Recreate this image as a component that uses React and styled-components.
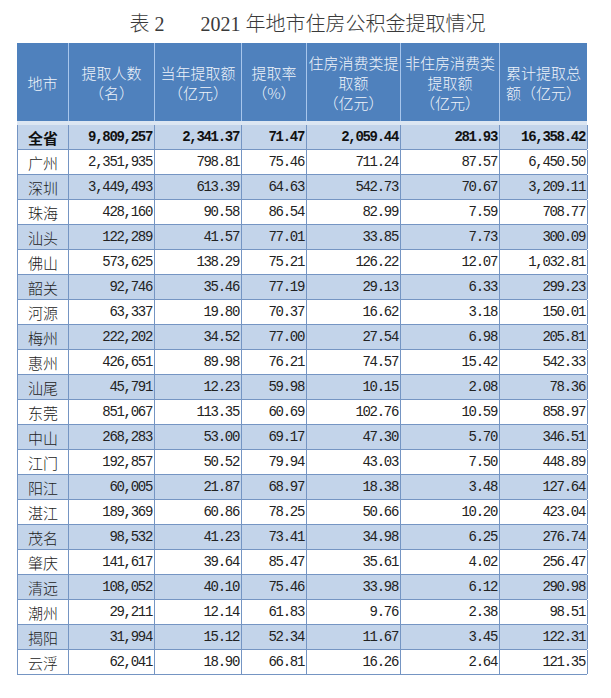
import React from "react";
import styled, { createGlobalStyle, css } from "styled-components";

const Global = createGlobalStyle`
  html, body { margin: 0; padding: 0; background: #ffffff; }
  body { font-family: "Noto Sans CJK SC", sans-serif; }
`;

const Page = styled.div`
  width: 611px;
  height: 698px;
  background: #ffffff;
  padding-top: 6px;
  box-sizing: border-box;
`;

const Title = styled.h1`
  margin: 0;
  height: 37px;
  padding-bottom: 4px;
  box-sizing: border-box;
  display: flex;
  justify-content: center;
  align-items: center;
  gap: 36px;
  font-family: "Liberation Serif", "Noto Sans CJK SC", serif;
  font-weight: 300;
  font-size: 20px;
  color: #3a3a3a;
  padding-left: 4px;
`;

const cols = "51px 86px 87px 65px 94px 99px 88px";

const Table = styled.div`
  margin-left: 17px;
  width: 570px;
`;

const HeadRow = styled.div`
  display: grid;
  grid-template-columns: ${cols};
  height: 78px;
  background: #4f81bd;
  border-bottom: 4px solid #dce6f2;
`;

const HeadCell = styled.div`
  display: flex;
  align-items: center;
  justify-content: center;
  text-align: center;
  color: #eef3fa;
  font-family: "Noto Sans CJK SC", sans-serif;
  font-weight: 300;
  font-size: 15px;
  line-height: 20px;
  padding-top: 2px;
  & + & { border-left: 1px solid #a8c6ec; }
`;

const Row = styled.div`
  display: grid;
  grid-template-columns: ${cols};
  height: 25px;
  box-sizing: border-box;
  border-bottom: 1px solid #7595c3;
  border-left: 1px solid #7595c3;
  background: ${(p) => (p.$shaded ? "#c3d4ea" : "#ffffff")};
`;

const Cell = styled.div`
  display: flex;
  align-items: center;
  justify-content: flex-end;
  padding-right: 2px;
  border-right: 1px solid #7595c3;
  color: #222;
  font-family: "Liberation Mono", "DejaVu Sans Mono", monospace;
  font-size: 14px;
  letter-spacing: -1.3px;
  white-space: nowrap;
  overflow: hidden;
  ${(p) =>
    p.$bold &&
    css`
      font-weight: 700;
      color: #111;
    `}
`;

const CityCell = styled(Cell)`
  justify-content: center;
  padding-right: 0;
  font-family: "Noto Sans CJK SC", sans-serif;
  font-size: 15px;
  font-weight: ${(p) => (p.$bold ? 700 : 300)};
  letter-spacing: 0;
`;

const headers = [
  ["地市"],
  ["提取人数", "（名）"],
  ["当年提取额", "（亿元）"],
  ["提取率", "（%）"],
  ["住房消费类提", "取额", "（亿元）"],
  ["非住房消费类", "提取额", "（亿元）"],
  ["累计提取总", "额（亿元）"],
];

const rows = [
  ["全省", "9,809,257", "2,341.37", "71.47", "2,059.44", "281.93", "16,358.42"],
  ["广州", "2,351,935", "798.81", "75.46", "711.24", "87.57", "6,450.50"],
  ["深圳", "3,449,493", "613.39", "64.63", "542.73", "70.67", "3,209.11"],
  ["珠海", "428,160", "90.58", "86.54", "82.99", "7.59", "708.77"],
  ["汕头", "122,289", "41.57", "77.01", "33.85", "7.73", "300.09"],
  ["佛山", "573,625", "138.29", "75.21", "126.22", "12.07", "1,032.81"],
  ["韶关", "92,746", "35.46", "77.19", "29.13", "6.33", "299.23"],
  ["河源", "63,337", "19.80", "70.37", "16.62", "3.18", "150.01"],
  ["梅州", "222,202", "34.52", "77.00", "27.54", "6.98", "205.81"],
  ["惠州", "426,651", "89.98", "76.21", "74.57", "15.42", "542.33"],
  ["汕尾", "45,791", "12.23", "59.98", "10.15", "2.08", "78.36"],
  ["东莞", "851,067", "113.35", "60.69", "102.76", "10.59", "858.97"],
  ["中山", "268,283", "53.00", "69.17", "47.30", "5.70", "346.51"],
  ["江门", "192,857", "50.52", "79.94", "43.03", "7.50", "448.89"],
  ["阳江", "60,005", "21.87", "68.97", "18.38", "3.48", "127.64"],
  ["湛江", "189,369", "60.86", "78.25", "50.66", "10.20", "423.04"],
  ["茂名", "98,532", "41.23", "73.41", "34.98", "6.25", "276.74"],
  ["肇庆", "141,617", "39.64", "85.47", "35.61", "4.02", "256.47"],
  ["清远", "108,052", "40.10", "75.46", "33.98", "6.12", "290.98"],
  ["潮州", "29,211", "12.14", "61.83", "9.76", "2.38", "98.51"],
  ["揭阳", "31,994", "15.12", "52.34", "11.67", "3.45", "122.31"],
  ["云浮", "62,041", "18.90", "66.81", "16.26", "2.64", "121.35"],
];

export default function App() {
  return (
    <Page>
      <Global />
      <Title>
        <span>表 2</span>
        <span>2021 年地市住房公积金提取情况</span>
      </Title>
      <Table>
        <HeadRow>
          {headers.map((lines, i) => (
            <HeadCell key={i}>
              <div>
                {lines.map((l, j) => (
                  <div key={j}>{l}</div>
                ))}
              </div>
            </HeadCell>
          ))}
        </HeadRow>
        {rows.map((r, i) => (
          <Row key={r[0]} $shaded={i % 2 === 0}>
            <CityCell $bold={i === 0}>{r[0]}</CityCell>
            {r.slice(1).map((v, j) => (
              <Cell key={j} $bold={i === 0}>
                {v}
              </Cell>
            ))}
          </Row>
        ))}
      </Table>
    </Page>
  );
}
